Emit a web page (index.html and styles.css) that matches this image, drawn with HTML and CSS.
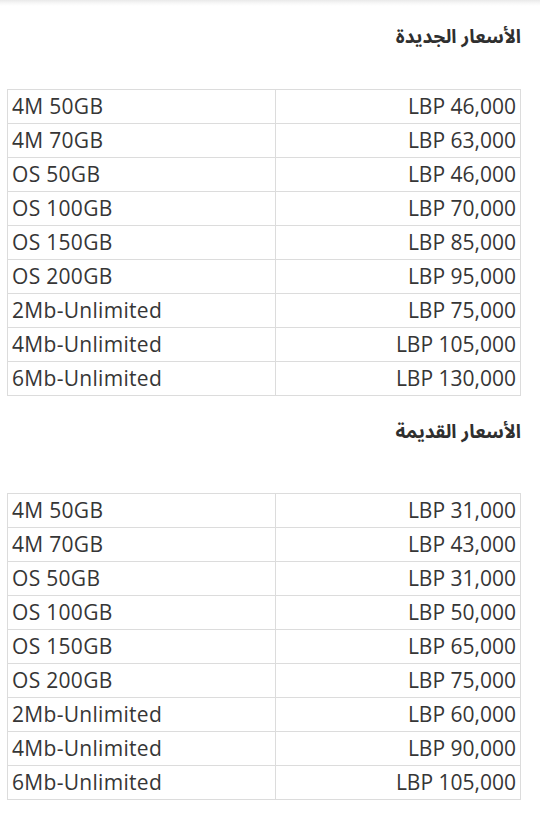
FILE: index.html
```html
<!DOCTYPE html>
<html lang="ar">
<head>
<meta charset="utf-8">
<link rel="stylesheet" href="styles.css">
</head>
<body>
<div class="page">
  <h2 class="title title-first" dir="rtl">الأسعار الجديدة</h2>
  <table class="prices">
    <tr><td class="name">4M 50GB</td><td class="price">LBP 46,000</td></tr>
    <tr><td class="name">4M 70GB</td><td class="price">LBP 63,000</td></tr>
    <tr><td class="name">OS 50GB</td><td class="price">LBP 46,000</td></tr>
    <tr><td class="name">OS 100GB</td><td class="price">LBP 70,000</td></tr>
    <tr><td class="name">OS 150GB</td><td class="price">LBP 85,000</td></tr>
    <tr><td class="name">OS 200GB</td><td class="price">LBP 95,000</td></tr>
    <tr><td class="name">2Mb-Unlimited</td><td class="price">LBP 75,000</td></tr>
    <tr><td class="name">4Mb-Unlimited</td><td class="price">LBP 105,000</td></tr>
    <tr><td class="name">6Mb-Unlimited</td><td class="price">LBP 130,000</td></tr>
  </table>
  <h2 class="title title-second" dir="rtl">الأسعار القديمة</h2>
  <table class="prices">
    <tr><td class="name">4M 50GB</td><td class="price">LBP 31,000</td></tr>
    <tr><td class="name">4M 70GB</td><td class="price">LBP 43,000</td></tr>
    <tr><td class="name">OS 50GB</td><td class="price">LBP 31,000</td></tr>
    <tr><td class="name">OS 100GB</td><td class="price">LBP 50,000</td></tr>
    <tr><td class="name">OS 150GB</td><td class="price">LBP 65,000</td></tr>
    <tr><td class="name">OS 200GB</td><td class="price">LBP 75,000</td></tr>
    <tr><td class="name">2Mb-Unlimited</td><td class="price">LBP 60,000</td></tr>
    <tr><td class="name">4Mb-Unlimited</td><td class="price">LBP 90,000</td></tr>
    <tr><td class="name">6Mb-Unlimited</td><td class="price">LBP 105,000</td></tr>
  </table>
</div>
</body>
</html>
```
FILE: styles.css
```css
html, body {
  margin: 0;
  padding: 0;
}
body {
  background: linear-gradient(#e9e9e9 0, #f7f7f7 3px, #ffffff 6px) no-repeat;
  background-color: #fff;
  width: 540px;
  height: 814px;
  overflow: hidden;
  color: #363636;
  font-family: "Open Sans", "Noto Sans", sans-serif;
}
.page {
  padding: 0 19px 0 7px;
}
.title {
  margin: 0;
  font-family: "Noto Sans Arabic", "Noto Sans", "DejaVu Sans", sans-serif;
  font-size: 19px;
  font-weight: 700;
  line-height: 24px;
  height: 24px;
  text-align: right;
  color: #2f2f2f;
}
.title-first {
  padding-top: 25px;
  margin-bottom: 40px;
}
.title-second {
  margin-top: 24px;
  margin-bottom: 49px;
}
.prices {
  width: 514px;
  border-collapse: collapse;
  table-layout: fixed;
  font-size: 21px;
}
.prices td {
  border: 1px solid #dcdcdc;
  height: 33px;
  padding: 0 4px;
  line-height: 33px;
  box-sizing: border-box;
  white-space: nowrap;
}
.prices .name {
  width: 268px;
  text-align: left;
  letter-spacing: 0.3px;
}
.prices .price {
  text-align: right;
}
```
